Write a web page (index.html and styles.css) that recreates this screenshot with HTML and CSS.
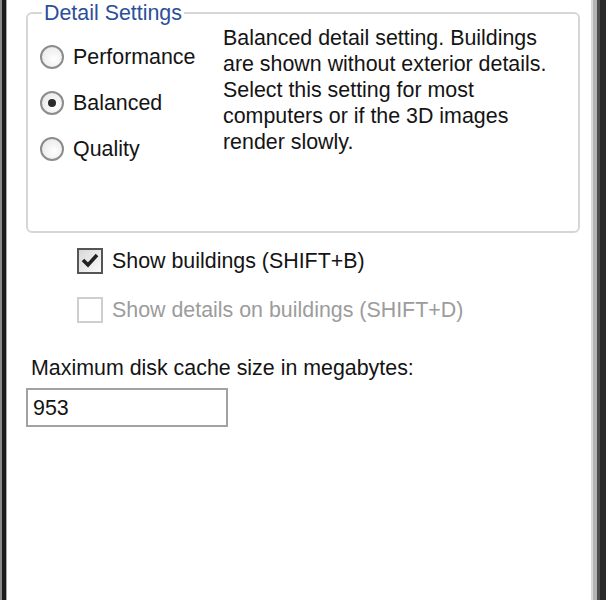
FILE: index.html
```html
<!DOCTYPE html>
<html lang="en">
<head>
  <meta charset="UTF-8">
  <meta name="viewport" content="width=device-width, initial-scale=1.0">
  <title>Detail Settings</title>
  <link rel="stylesheet" href="styles.css">
</head>
<body>
  <div class="window">
    <fieldset class="group">
      <legend>Detail Settings</legend>
      <div class="group-body">
        <div class="radios">
          <label class="radio-row">
            <span class="radio"></span>
            <span>Performance</span>
          </label>
          <label class="radio-row">
            <span class="radio checked"></span>
            <span>Balanced</span>
          </label>
          <label class="radio-row">
            <span class="radio"></span>
            <span>Quality</span>
          </label>
        </div>
        <p class="desc">Balanced detail setting. Buildings are shown without exterior details. Select this setting for most computers or if the 3D images render slowly.</p>
      </div>
    </fieldset>

    <div class="checks">
      <label class="check-row">
        <span class="check">
          <svg width="22" height="22" viewBox="0 0 22 22"><path d="M4 10 L9 15 L18 5" fill="none" stroke="#222" stroke-width="3.6"/></svg>
        </span>
        <span>Show buildings (SHIFT+B)</span>
      </label>
      <label class="check-row disabled">
        <span class="check"></span>
        <span>Show details on buildings (SHIFT+D)</span>
      </label>
    </div>

    <p class="cache-label">Maximum disk cache size in megabytes:</p>
    <div class="cache-input">953</div>
  </div>
</body>
</html>
```

FILE: styles.css
```css
* {
  box-sizing: border-box;
}
body {
  margin: 0;
  background: #fff;
  font-family: 'Liberation Sans', Arial, sans-serif;
  font-size: 21.4px;
  line-height: 26px;
  color: #141414;
}
.window {
  height: 600px;
  padding: 0 26px;
  background: #fff;
  box-shadow:
    inset 2px 0 0 #8a8a8a,
    inset 6px 0 0 #1c1c1c,
    inset 7px 0 0 #a8a8a8,
    inset -6px 0 0 #2a2a2a,
    inset -9px 0 0 #4e4e4e,
    inset -13px 0 0 #b4b4b4,
    inset -15px 0 0 #dadada;
}
.group {
  margin: 0;
  height: 233px;
  padding: 0 0 0 12px;
  border: 2px solid #d6d6d6;
  border-radius: 6px;
}
.group legend {
  margin-left: 2px;
  padding: 0 2px 0 2px;
  color: #2b4f9b;
  line-height: 26px;
}
.group-body {
  display: grid;
  grid-template-columns: 183px 1fr;
}
.radios {
  display: flex;
  flex-direction: column;
  padding-top: 8px;
}
.radio-row {
  display: flex;
  align-items: center;
  gap: 9px;
  height: 46px;
}
.radio {
  width: 24px;
  height: 24px;
  border-radius: 50%;
  border: 2px solid #8c8c8c;
  background: radial-gradient(circle at 60% 60%, #fff 0%, #ececec 70%, #d8d8d8 100%);
  display: flex;
  align-items: center;
  justify-content: center;
}
.radio.checked::after {
  content: "";
  width: 8px;
  height: 8px;
  border-radius: 50%;
  background: #2a2a2a;
}
.desc {
  margin: -1px 0 0 0;
  padding-right: 20px;
}
.checks {
  margin-top: 4px;
  padding-left: 51px;
  display: flex;
  flex-direction: column;
  gap: 1px;
}
.check-row {
  display: flex;
  align-items: center;
  gap: 9px;
  height: 48px;
}
.check {
  width: 26px;
  height: 26px;
  border: 2px solid #555;
  background: linear-gradient(135deg, #d8d8d8, #fafafa);
  display: flex;
}
.check-row.disabled {
  color: #9c9c9c;
}
.check-row.disabled .check {
  border-color: #cfcfcf;
  background: #fff;
}
.cache-label {
  margin: 21px 0 0 5px;
}
.cache-input {
  margin-top: 7px;
  width: 202px;
  height: 39px;
  border: 2px solid #a2a2a2;
  padding: 4px 0 0 5px;
  line-height: 28px;
}
```
